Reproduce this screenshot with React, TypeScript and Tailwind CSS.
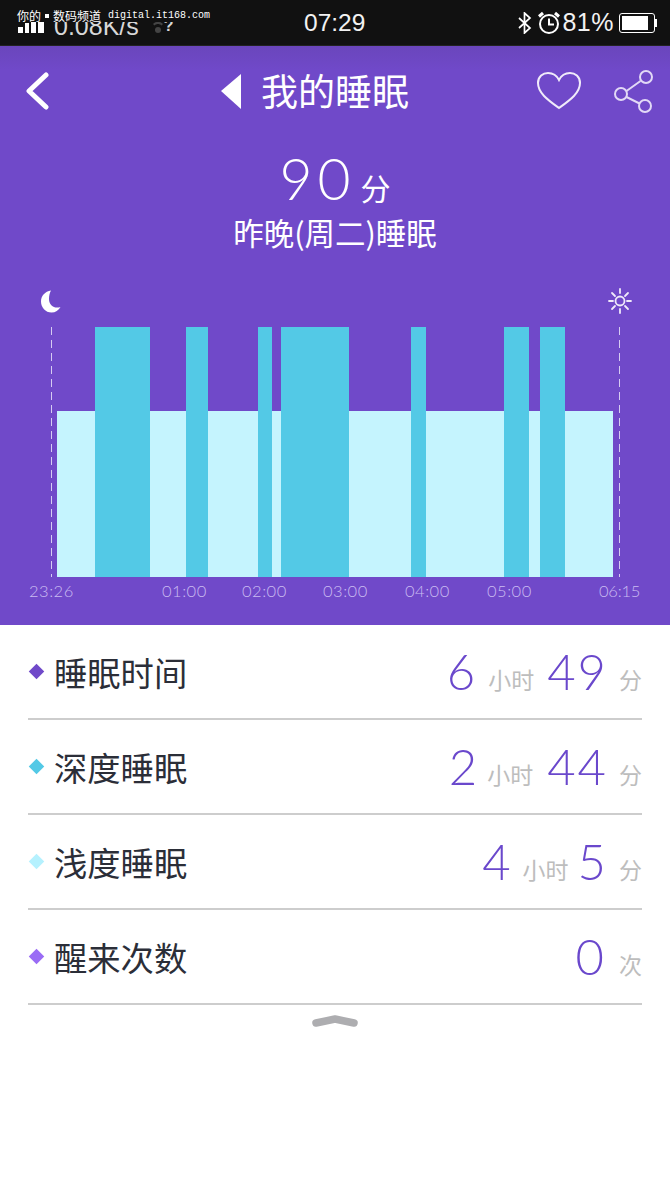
import React from "react";

const cjk = "font-['Noto_Sans_CJK_SC','Noto_Sans',sans-serif]";
const num = "font-['Lato','Noto_Sans_CJK_SC',sans-serif]";

function Row({ color, label, parts }: { color: string; label: string; parts: [string, string, string, string][] }) {
  return (
    <div className="flex h-[95px] items-center justify-between border-b-2 border-[#cdcdcd]">
      <div className="flex items-center">
        <span className={`ml-[3px] h-[11px] w-[11px] rotate-45 ${color}`} />
        <span className={`ml-[12px] text-[33.300px] leading-none text-[#2b2e38] ${cjk}`}>{label}</span>
      </div>
      <div className="flex items-baseline">
        {parts.map(([n, u, cls, ucls], i) => (
          <React.Fragment key={i}>
            <span className={`text-[49px] leading-none font-light tracking-[2px] text-[#6a48cc] ${num} ${cls}`}>{n}</span>
            <span className={`-translate-y-[1px] text-[23px] leading-none text-[#bdbdbd] ${cjk} ${ucls}`}>{u}</span>
          </React.Fragment>
        ))}
      </div>
    </div>
  );
}

const segs: [string, boolean][] = [
  ["w-[38px]", false], ["w-[55px]", true], ["w-[36px]", false], ["w-[22px]", true], ["w-[50px]", false],
  ["w-[14px]", true], ["w-[9px]", false], ["w-[68px]", true], ["w-[62px]", false], ["w-[15px]", true],
  ["w-[78px]", false], ["w-[25px]", true], ["w-[11px]", false], ["w-[25px]", true], ["w-[48px]", false],
];

const ticks: [string, string][] = [
  ["23:26", "w-[133px]"], ["01:00", "w-[80px]"], ["02:00", "w-[81px]"], ["03:00", "w-[82px]"],
  ["04:00", "w-[82px]"], ["05:00", "w-[112px]"], ["06:15", "tracking-[-0.2px]"],
];

export default function App() {
  return (
    <div className={`relative flex h-[1191px] w-[670px] flex-col overflow-hidden bg-white ${cjk}`}>
      {/* status bar */}
      <div className="relative flex h-[46px] shrink-0 items-center justify-between border-b border-[#222] bg-[#111111] pl-[18px] pr-[13px] font-['Liberation_Sans',sans-serif] text-[#f2f2f2]">
        <div className="mb-[12px] flex items-end gap-[2px] self-end">
          <span className="h-[6px] w-[5px] bg-white" />
          <span className="h-[10px] w-[4px] bg-white" />
          <span className="h-[16px] w-[5px] bg-white" />
          <span className="h-[22px] w-[6px] bg-white" />
          <span className="ml-[8px] -mb-[5px] text-[25px] leading-[24px] text-[#d8d8d8]">0.08K/s</span>
          <svg width="12" height="14" viewBox="0 0 12 14" fill="#444" className="ml-[11px]">
            <path d="M1 5c3-3 7-3 10 0l-1.500 1.500c-2-2-5-2-7 0z" />
            <circle cx="6" cy="11" r="3" />
          </svg>
          <span className="-ml-[2px] text-[16px] leading-[14px] font-bold text-[#d8d8d8]">?</span>
        </div>
        <span className="absolute left-[304px] top-[9px] text-[24.500px] leading-[28px]">07:29</span>
        <div className="flex items-center">
          <svg width="16" height="22" viewBox="0 0 16 22" fill="none" stroke="white" strokeWidth="1.7">
            <path d="M2 6l11 10-5.500 5V1L13 6 2 16" />
          </svg>
          <svg width="24" height="24" viewBox="0 0 24 24" fill="none" stroke="white" strokeWidth="2" className="ml-[4px]">
            <circle cx="12" cy="13" r="9" />
            <path d="M12 7.500V13.500H17" />
            <path d="M2 5.500 6 2M22 5.500 18 2" strokeWidth="3" />
          </svg>
          <span className="ml-[1px] text-[25px] leading-none tracking-[0.5px]">81%</span>
          <div className="ml-[5px] flex items-center">
            <div className="h-[20px] w-[36px] rounded-[3px] border border-white p-[2px]">
              <div className="h-full w-[26px] bg-white" />
            </div>
            <div className="h-[8px] w-[2px] bg-white" />
          </div>
        </div>
        {/* watermark */}
        <div className="absolute left-[17px] top-[9px] flex h-[13px] items-center bg-[#111111] text-white">
          <span className={`${cjk} text-[12px] leading-none`}>你的</span>
          <span className="mx-[4px] h-[4px] w-[4px] bg-white" />
          <span className={`${cjk} text-[12px] leading-none`}>数码频道</span>
          <span className="ml-[7px] font-['Liberation_Mono',monospace] text-[10px] leading-none">digital.it168.com</span>
        </div>
      </div>

      {/* purple */}
      <div className="flex h-[579px] shrink-0 flex-col bg-[#7049c9] bg-[linear-gradient(#6a46bc,#7049c9_24px)]">
        <div className="flex h-[90px] shrink-0 items-center pb-[1px]">
          <svg width="26" height="38" viewBox="0 0 26 38" fill="none" stroke="white" strokeWidth="5" strokeLinecap="round" strokeLinejoin="round" className="ml-[25px]">
            <path d="M21 3 4 19l17 16" />
          </svg>
          <svg width="22" height="36" viewBox="0 0 22 36" fill="white" className="ml-[169px]">
            <path d="M21 1v35L1 18z" />
          </svg>
          <span className="ml-[19px] w-[148px] whitespace-nowrap text-[37px] leading-none text-white">我的睡眠</span>
          <svg width="46" height="40" viewBox="0 0 46 40" fill="none" stroke="#f0ebfa" strokeWidth="2" className="ml-[127px]">
            <path d="M23 37C12 29 2 22 2 12 2 5.500 7 2 12 2c5 0 9 3 11 7 2-4 6-7 11-7 5 0 10 3.500 10 10 0 10-10 17-21 25z" />
          </svg>
          <svg width="40" height="44" viewBox="0 0 40 44" fill="none" stroke="#e2d9f6" strokeWidth="2" className="ml-[32px]">
            <circle cx="32" cy="8" r="6" />
            <circle cx="7" cy="25" r="6" />
            <circle cx="31" cy="37" r="6" />
            <path d="M12.500 22 26.500 12M12.500 28 25.500 34.500" />
          </svg>
        </div>
        <div className="mt-[16px] flex flex-col items-center">
          <div className="flex h-[52px] items-baseline justify-center text-white">
            <span className={`text-[57px] leading-[52px] font-light tracking-[5px] ${num}`}>90</span>
            <span className="ml-[5px] text-[30px] leading-none">分</span>
          </div>
          <div className="mt-[9px] flex h-[38px] items-center whitespace-nowrap text-[30.500px] leading-none text-white">昨晚(周二)睡眠</div>
        </div>

        <div className="mt-[33px] flex h-[43px] items-center justify-between pb-[9px] pl-[40px] pr-[38px]">
          <svg width="21" height="23" viewBox="0 0 21 23" fill="white">
            <path d="M11 0.500C5 1.500 1 6 1 11.500 1 17.500 5.500 22.500 11.500 22.500c4 0 7-2 9-5.500-6 2-11.500-1.500-11.500-8 0-3.500.8-6.500 2-8.500z" />
          </svg>
          <svg width="24" height="26" viewBox="0 0 24 26" fill="none" stroke="#efe9fa" strokeWidth="1.800" strokeLinecap="round">
            <circle cx="12" cy="13" r="4.500" />
            <path d="M12 1v4M12 21v4M1 13h4M19 13h4M4 5l3 3M17 18l3 3M4 21l3-3M17 8l3-3" />
          </svg>
        </div>

        <div className="flex h-[250px] pl-[51px]">
          <div className="h-[250px] w-px bg-[repeating-linear-gradient(#d6cbf2_0_8px,transparent_8px_13px)]" />
          <div className="ml-[5px] flex h-[250px] w-[556px] items-end">
            {segs.map(([w, deep], i) =>
              deep ? (
                <div key={i} className={`h-[250px] bg-[#53c9e6] ${w}`} />
              ) : (
                <div key={i} className={`h-[166px] bg-[#c5f4fe] ${w}`} />
              ),
            )}
          </div>
          <div className="ml-[6px] h-[250px] w-px bg-[repeating-linear-gradient(#d6cbf2_0_8px,transparent_8px_13px)]" />
        </div>

        <div className={`mt-[4px] flex pl-[29px] text-[16.500px] leading-[20px] font-light tracking-[0.5px] text-[#cbbcf2] ${num}`}>
          {ticks.map(([t, w]) => (
            <span key={t} className={`block shrink-0 ${w}`}>{t}</span>
          ))}
        </div>
      </div>

      {/* list */}
      <div className="flex flex-col px-[28px]">
        <Row color="bg-[#7049c9]" label="睡眠时间" parts={[["6", "小时", "", "ml-[11px]"], ["49", "分", "ml-[13px]", "ml-[11px]"]]} />
        <Row color="bg-[#53c9e6]" label="深度睡眠" parts={[["2", "小时", "", "ml-[8px]"], ["44", "分", "ml-[14px]", "ml-[11px]"]]} />
        <Row color="bg-[#b5f1fe]" label="浅度睡眠" parts={[["4", "小时", "", "ml-[10px]"], ["5", "分", "ml-[9px]", "ml-[11px]"]]} />
        <Row color="bg-[#9a6cf5]" label="醒来次数" parts={[["0", "次", "", "ml-[13px]"]]} />
      </div>
      <div className="mt-[8px] flex justify-center">
        <svg width="46" height="16" viewBox="0 0 46 16" fill="none" stroke="#adadb0" strokeWidth="7.500" strokeLinecap="round" strokeLinejoin="round">
          <path d="M4 10 23 6l19 4" />
        </svg>
      </div>
    </div>
  );
}
